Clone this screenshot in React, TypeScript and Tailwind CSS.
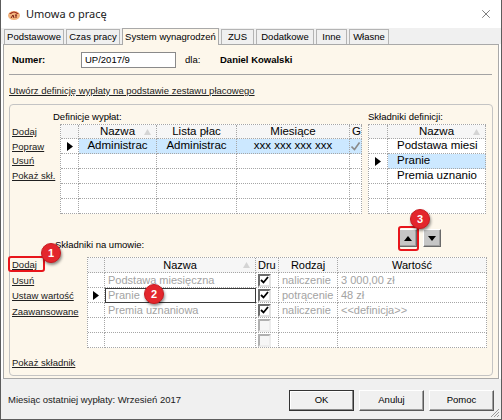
import React from "react";
import { X } from "lucide-react";

type Col = {
  w: string;
  label: string;
  head?: "center" | "left";
  sort?: boolean;
  body?: string;
};

const ARROW = (
  <svg width="7" height="6" viewBox="0 0 7 6">
    <polygon points="3.5,0 7,6 0,6" fill="#d4d4d4" />
  </svg>
);

const Tri = () => (
  <svg width="6" height="9" viewBox="0 0 6 9">
    <polygon points="0,0 6,4.5 0,9" fill="#000" />
  </svg>
);

const Check = ({ on }: { on: boolean }) => (
  <span
    className={
      on
        ? "flex items-center justify-center w-[13px] h-[13px] bg-white border-2 border-t-[#6b6b6b] border-l-[#6b6b6b] border-r-[#e2e2e2] border-b-[#e2e2e2]"
        : "flex items-center justify-center w-[13px] h-[13px] bg-[#f6f6f6] border-2 border-t-[#b0b0b0] border-l-[#b0b0b0] border-r-[#ededed] border-b-[#ededed]"
    }
  >
    {on && (
      <svg width="9" height="8" viewBox="0 0 9 8">
        <polyline points="1,4 3.5,6.5 8,1" fill="none" stroke="#000" strokeWidth="1.8" />
      </svg>
    )}
  </span>
);

const GrayTick = () => (
  <svg width="9" height="9" viewBox="0 0 9 9">
    <polyline points="0.5,4.5 3.5,7.5 8.5,0.5" fill="none" stroke="#8a8a8a" strokeWidth="1.6" />
  </svg>
);

// siatka w stylu Delphi (kropkowane linie)
const Grid = ({
  cols,
  rows,
  selected,
  headH,
  text,
  focus,
  highlight = true,
}: {
  cols: Col[];
  rows: React.ReactNode[][];
  selected: number;
  headH: string;
  text: string;
  focus?: number;
  highlight?: boolean;
}) => (
  <div className={`flex flex-col border-t border-l border-dotted border-[#a6a6a6] bg-white ${text}`}>
    <div className={`flex ${headH} bg-[#f6f6f6]`}>
      {cols.map((c, i) => (
        <div
          key={i}
          className={`${c.w} shrink-0 relative flex items-center overflow-hidden whitespace-nowrap border-r border-b border-dotted border-[#a6a6a6] ${
            c.head === "left" ? "justify-start pl-[2px]" : "justify-center"
          }`}
        >
          {c.label}
          {c.sort && <span className="absolute right-[5px] top-[4px]">{ARROW}</span>}
        </div>
      ))}
    </div>
    {rows.map((r, ri) => (
      <div key={ri} className="flex h-[15px]">
        {cols.map((c, ci) => (
          <div
            key={ci}
            className={`${c.w} shrink-0 flex items-center overflow-hidden whitespace-nowrap border-r border-b border-dotted border-[#a6a6a6] ${
              c.body ?? ""
            } ${highlight && ri === selected && ci > 0 ? "bg-[#cce8ff]" : ""} ${
              ri === focus && ci === 1 ? "outline-1 outline-[#3a3a3a] -outline-offset-1" : ""
            }`}
          >
            {ci === 0 && ri === selected ? <Tri /> : r[ci]}
          </div>
        ))}
      </div>
    ))}
  </div>
);

const defCols: Col[] = [
  { w: "w-[18px]", label: "", body: "justify-center" },
  { w: "w-[78px]", label: "Nazwa", sort: true, body: "justify-center" },
  { w: "w-[80px]", label: "Lista płac", body: "justify-center" },
  { w: "w-[113px]", label: "Miesiące", body: "justify-center" },
  { w: "w-[12px]", label: "G", head: "left", body: "justify-center" },
];

const defRows: React.ReactNode[][] = [
  ["", "Administrac", "Administrac", "xxx xxx xxx xxx", <GrayTick />],
  ["", "", "", "", ""],
  ["", "", "", "", ""],
  ["", "", "", "", ""],
  ["", "", "", "", ""],
];

const skCols: Col[] = [
  { w: "w-[19px]", label: "", body: "justify-center" },
  { w: "w-[98px]", label: "Nazwa", sort: true, body: "pl-[9px]" },
];

const skRows: React.ReactNode[][] = [
  ["", "Podstawa miesi"],
  ["", "Pranie"],
  ["", "Premia uznanio"],
  ["", ""],
  ["", ""],
];

const umCols: Col[] = [
  { w: "w-[17px]", label: "", body: "justify-center" },
  { w: "w-[151px]", label: "Nazwa", sort: true, body: "pl-[3px] text-[#a3a3a3]" },
  { w: "w-[23px]", label: "Dru", head: "left", body: "pl-[2px]" },
  { w: "w-[59px]", label: "Rodzaj", body: "pl-[3px] text-[#a3a3a3]" },
  { w: "w-[149px]", label: "Wartość", body: "pl-[3px] text-[#a3a3a3]" },
];

const umRows: React.ReactNode[][] = [
  ["", "Podstawa miesięczna", <Check on />, "naliczenie", "3 000,00 zł"],
  ["", "Pranie", <Check on />, "potrącenie", "48 zł"],
  ["", "Premia uznaniowa", <Check on />, "naliczenie", "<<definicja>>"],
  ["", "", <Check on={false} />, "", ""],
  ["", "", <Check on={false} />, "", ""],
];

const tabs = [
  { t: "Podstawowe", w: "w-[60px]" },
  { t: "Czas pracy", w: "w-[54px]" },
  { t: "System wynagrodzeń", w: "w-[97px]", on: true },
  { t: "ZUS", w: "w-[33px]" },
  { t: "Dodatkowe", w: "w-[58px]" },
  { t: "Inne", w: "w-[31px]" },
  { t: "Własne", w: "w-[40px]" },
];

const Link = ({ children }: { children: React.ReactNode }) => (
  <span className="underline text-[#202020] whitespace-nowrap">{children}</span>
);

const Badge = ({ n, pos }: { n: string; pos: string }) => (
  <div
    className={`absolute ${pos} w-[20px] h-[20px] rounded-full bg-[#e3262c] border border-[#c81a20] shadow-[1px_2px_3px_rgba(0,0,0,0.45)] flex items-center justify-center text-white font-bold text-[11px] font-['Liberation_Sans',Arial,sans-serif]`}
  >
    {n}
  </div>
);

const ArrowBtn = ({ up }: { up?: boolean }) => (
  <div className="w-[18px] h-[18px] flex items-center justify-center bg-[#c6c6c6] border border-t-white border-l-white border-r-[#6a6a6a] border-b-[#6a6a6a] shadow-[inset_-1px_-1px_0_#a0a0a0]">
    <svg width="8" height="5" viewBox="0 0 8 5">
      <polygon points={up ? "4,0 8,5 0,5" : "0,0 8,0 4,5"} fill="#000" />
    </svg>
  </div>
);

export default function App() {
  return (
    <div className="relative w-[502px] h-[420px] bg-white border-x border-b border-[#5c5c5c] flex flex-col overflow-hidden font-['Liberation_Sans',Arial,sans-serif] text-[9.5px] text-black">
      {/* pasek tytułu */}
      <div className="h-[28px] shrink-0 flex items-center pl-[7px] pr-[8px]">
        <svg width="12" height="11" viewBox="0 0 12 11">
          <ellipse cx="6" cy="6.5" rx="6" ry="4.5" fill="#f1b37c" />
          <path d="M1 5 Q6 0 11 5 L9 5 Q6 2 3 5 Z" fill="#9c2a1c" />
          <path d="M3 9 L5 6 L6 9 M7 6 L9 6 M8 6 L8 9" stroke="#7a1d12" strokeWidth="1" fill="none" />
        </svg>
        <span className="ml-[6px] text-[11px] font-['Noto_Sans',sans-serif] text-[#1a1a1a]">Umowa o pracę</span>
        <X size={14} strokeWidth={1} className="ml-auto text-[#222]" />
      </div>

      {/* zakładki */}
      <div className="h-[16px] shrink-0 bg-[#f0f0f0] flex items-end gap-[2px] pl-[3px]">
        {tabs.map((t) =>
          t.on ? (
            <div
              key={t.t}
              className={`${t.w} h-[17px] mb-[-1px] relative z-10 bg-[#fdf7eb] border border-b-0 border-[#a9a9a9] flex items-center justify-center whitespace-nowrap`}
            >
              {t.t}
            </div>
          ) : (
            <div
              key={t.t}
              className={`${t.w} h-[15px] bg-[#f0f0f0] border border-b-0 border-[#b4b4b4] flex items-center justify-center whitespace-nowrap`}
            >
              {t.t}
            </div>
          )
        )}
      </div>

      {/* panel */}
      <div className="ml-[2px] w-[496px] h-[335px] shrink-0 bg-[#fdf7eb] border border-[#a9a9a9] flex flex-col">
        <div className="mt-[7px] h-[16px] flex items-center pl-[8px]">
          <span className="w-[69px] font-bold">Numer:</span>
          <div className="w-[95px] h-[16px] bg-white border border-[#8a8a8a] flex items-center pl-[3px]">UP/2017/9</div>
          <span className="ml-[9px] w-[35px]">dla:</span>
          <span className="font-bold">Daniel Kowalski</span>
        </div>
        <div className="ml-[5px] mt-[6px] w-[483px] h-px bg-[#a3a3a3]" />
        <div className="ml-[5px] mt-[9px] leading-[13px]">
          <Link>Utwórz definicję wypłaty na podstawie zestawu płacowego</Link>
        </div>

        {/* ramka grupy */}
        <div className="ml-[5px] mt-[7px] w-[484px] h-[272px] border border-[#c4c4c4] rounded-[4px] flex flex-col">
          <div className="mt-[4px] flex items-start">
            <div className="w-[43px] pl-[2px] pt-[16px] flex flex-col leading-[14.5px]">
              <Link>Dodaj</Link>
              <Link>Popraw</Link>
              <Link>Usuń</Link>
              <Link>Pokaż skł.</Link>
            </div>
            <div className="flex flex-col">
              <div className="h-[15px] leading-[15px]">Definicje wypłat:</div>
              <div className="ml-[7px]">
                <Grid cols={defCols} rows={defRows} selected={0} headH="h-[14px]" text="text-[11.5px]" />
              </div>
            </div>
            <div className="ml-[6px] flex flex-col">
              <div className="h-[15px] leading-[15px]">Składniki definicji:</div>
              <Grid cols={skCols} rows={skRows} selected={1} headH="h-[14px]" text="text-[11.5px]" />
            </div>
          </div>

          <div className="h-[43px] flex items-start">
            <div className="ml-[45px] pt-[24px] leading-[14px]">Składniki na umowie:</div>
            <div className="ml-auto mr-[51px] mt-[15px] flex gap-[6px]">
              <ArrowBtn up />
              <ArrowBtn />
            </div>
          </div>

          <div className="flex items-start">
            <div className="w-[77px] pl-[2px] flex flex-col leading-[15.5px]">
              <Link>Dodaj</Link>
              <Link>Usuń</Link>
              <Link>Ustaw wartość</Link>
              <Link>Zaawansowane</Link>
            </div>
            <Grid
              cols={umCols}
              rows={umRows}
              selected={1}
              headH="h-[15px]"
              text="text-[11px]"
              focus={1}
              highlight={false}
            />
          </div>

          <div className="pl-[2px] mt-[8px] leading-[14px]">
            <Link>Pokaż składnik</Link>
          </div>
        </div>
      </div>

      {/* dół okna */}
      <div className="flex-1 bg-[#f0f0f0] flex items-center pl-[7px] pr-[7px] pt-[3px]">
        <span className="text-[#1a1a1a]">Miesiąc ostatniej wypłaty: Wrzesień 2017</span>
        <div className="ml-auto flex gap-[5px]">
          <button className="w-[65px] h-[21px] bg-[#f0f0f0] border border-[#333] shadow-[inset_-1px_-1px_0_#8a8a8a,inset_1px_1px_0_#fff]">
            OK
          </button>
          <button className="w-[65px] h-[21px] bg-[#f0f0f0] border border-t-white border-l-white border-r-[#5a5a5a] border-b-[#5a5a5a] shadow-[inset_-1px_-1px_0_#a0a0a0]">
            Anuluj
          </button>
          <button className="w-[65px] h-[21px] bg-[#f0f0f0] border border-t-white border-l-white border-r-[#5a5a5a] border-b-[#5a5a5a] shadow-[inset_-1px_-1px_0_#a0a0a0]">
            Pomoc
          </button>
        </div>
      </div>

      {/* uchwyt zmiany rozmiaru */}
      <svg className="absolute right-[1px] bottom-[1px]" width="11" height="11" viewBox="0 0 11 11">
        <path d="M10 2 L2 10 M10 5 L5 10 M10 8 L8 10" stroke="#9a9a9a" strokeWidth="1" />
      </svg>

      {/* znaczniki instrukcji */}
      <div className="absolute left-[7px] top-[256px] w-[37px] h-[16px] border-2 border-[#e8151b] rounded-[3px]" />
      <div className="absolute left-[397px] top-[226px] w-[21px] h-[25px] border-2 border-[#e8151b] rounded-[3px]" />
      <Badge n="1" pos="left-[40px] top-[243px]" />
      <Badge n="2" pos="left-[143px] top-[284px]" />
      <Badge n="3" pos="left-[409px] top-[209px]" />
    </div>
  );
}
